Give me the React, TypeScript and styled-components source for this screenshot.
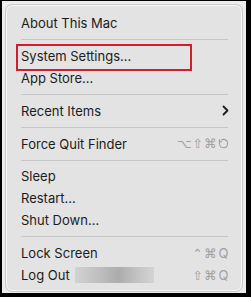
import styled, { createGlobalStyle } from "styled-components";

const GlobalStyle = createGlobalStyle`
  html, body {
    margin: 0;
    padding: 0;
    background: #000;
  }
  * {
    box-sizing: border-box;
  }
`;

const Frame = styled.div`
  width: 251px;
  height: 297px;
  background: #000;
  padding: 1px 5px 4px 2px;
`;

const Backdrop = styled.div`
  width: 100%;
  height: 100%;
  background: #ececec;
  padding: 3px 3px 1px 3px;
`;

const Panel = styled.div`
  height: 100%;
  background: #e3e3e3;
  border: 1px solid #c9c9c9;
  border-radius: 7px;
  box-shadow: inset 0 0 0 1px #f7f7f7;
  padding: 7px 0 5px;
  display: flex;
  flex-direction: column;
  font-family: Inter, "Liberation Sans", sans-serif;
  font-size: 13px;
  color: #1c1c1c;
`;

const Item = styled.div<{ $marked?: boolean }>`
  position: relative;
  height: 22px;
  padding: 0 13px 0 15px;
  display: flex;
  align-items: center;
  justify-content: space-between;

  ${(p) =>
    p.$marked &&
    `
    &::after {
      content: "";
      position: absolute;
      left: 10px;
      top: -1px;
      width: 172px;
      height: 23px;
      border: 2px solid #cf1f2e;
    }
  `}
`;

const Label = styled.span`
  display: flex;
  align-items: center;
  gap: 5px;
  white-space: nowrap;
`;

const Blurred = styled.span`
  display: inline-block;
  width: 79px;
  height: 16px;
  background: linear-gradient(
    90deg,
    #d2d2d2 0%,
    #bcbcbc 35%,
    #acacac 55%,
    #c4c4c4 80%,
    #d4d4d4 100%
  );
  filter: blur(0.6px);
`;

const Separator = styled.div`
  height: 1px;
  margin: 5px 14px 5px 15px;
  background: #c7c7c7;
`;

const Keys = styled.span`
  display: flex;
  align-items: center;
  gap: 2px;
  color: #a0a0a0;
  font-family: "DejaVu Sans", sans-serif;
  font-size: 12.5px;
`;

const Key = styled.span`
  width: 11px;
  display: flex;
  justify-content: center;
`;

const Letter = styled(Key)`
  font-family: Inter, "Liberation Sans", sans-serif;
  font-size: 13px;
`;

const Chevron = () => (
  <svg width="8" height="11" viewBox="0 0 8 11">
    <polyline
      points="2.5,1.5 6.5,5.5 2.5,9.5"
      fill="none"
      stroke="#1c1c1c"
      strokeWidth="1.8"
      strokeLinecap="round"
      strokeLinejoin="round"
    />
  </svg>
);

const EscapeIcon = () => (
  <svg width="11" height="11" viewBox="0 0 11 11">
    <path
      d="M3.2 2.1 A4.2 4.2 0 1 1 1.6 4.2"
      fill="none"
      stroke="#a0a0a0"
      strokeWidth="1.1"
    />
    <polyline
      points="1.4,1.2 1.4,3.6 3.8,3.6"
      fill="none"
      stroke="#a0a0a0"
      strokeWidth="1.1"
    />
  </svg>
);

export default function App() {
  return (
    <>
      <GlobalStyle />
      <Frame>
        <Backdrop>
          <Panel>
            <Item>
              <Label>About This Mac</Label>
            </Item>
            <Separator />
            <Item $marked>
              <Label>System Settings…</Label>
            </Item>
            <Item>
              <Label>App Store…</Label>
            </Item>
            <Separator />
            <Item>
              <Label>Recent Items</Label>
              <Chevron />
            </Item>
            <Separator />
            <Item>
              <Label>Force Quit Finder</Label>
              <Keys>
                <Key>⌥</Key>
                <Key>⇧</Key>
                <Key>⌘</Key>
                <Key>
                  <EscapeIcon />
                </Key>
              </Keys>
            </Item>
            <Separator />
            <Item>
              <Label>Sleep</Label>
            </Item>
            <Item>
              <Label>Restart…</Label>
            </Item>
            <Item>
              <Label>Shut Down…</Label>
            </Item>
            <Separator />
            <Item>
              <Label>Lock Screen</Label>
              <Keys>
                <Key>⌃</Key>
                <Key>⌘</Key>
                <Letter>Q</Letter>
              </Keys>
            </Item>
            <Item>
              <Label>
                Log Out <Blurred />
              </Label>
              <Keys>
                <Key>⇧</Key>
                <Key>⌘</Key>
                <Letter>Q</Letter>
              </Keys>
            </Item>
          </Panel>
        </Backdrop>
      </Frame>
    </>
  );
}
